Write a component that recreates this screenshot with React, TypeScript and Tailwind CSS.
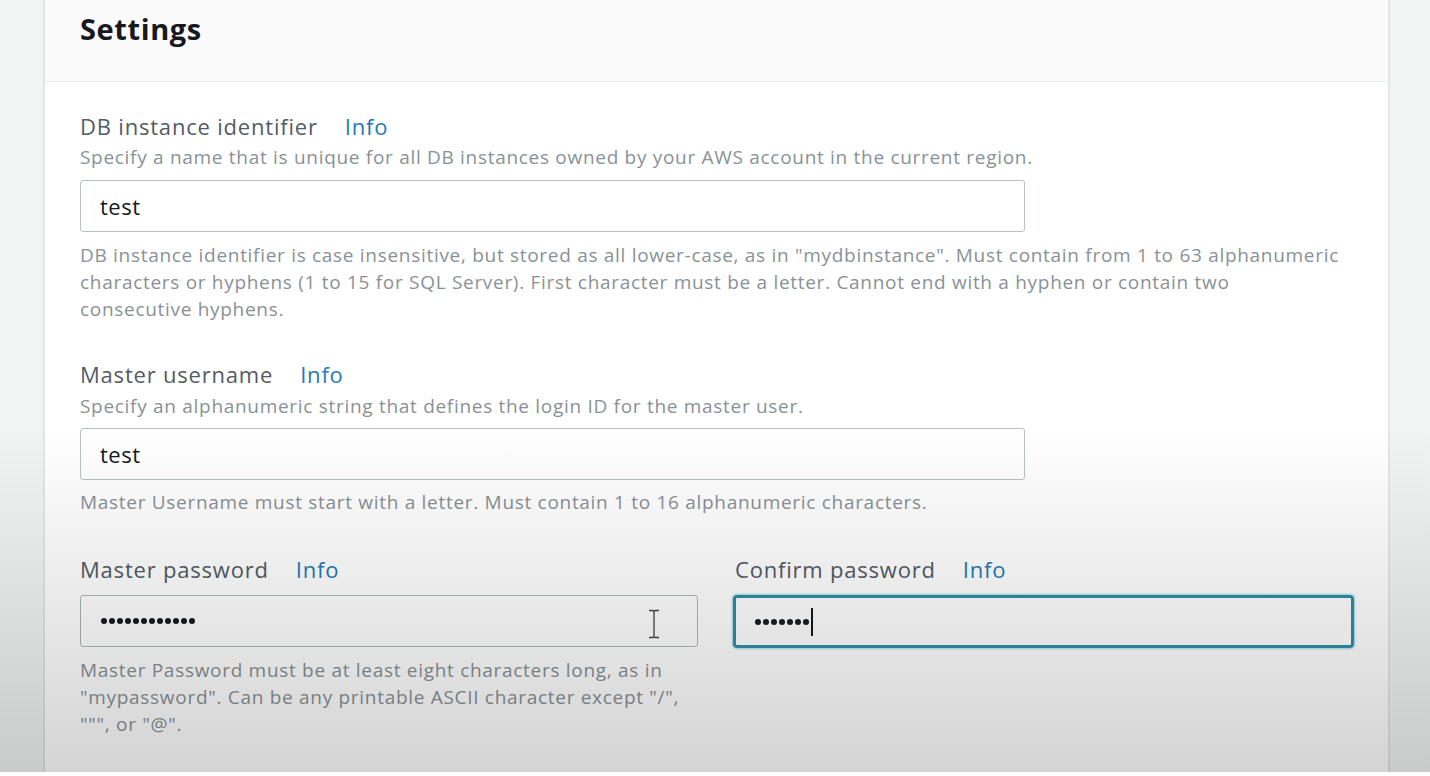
import React from 'react'

const font = { fontFamily: '"Open Sans", "Liberation Sans", sans-serif' }

function Label({ text }: { text: string }) {
  return (
    <div className="flex items-center h-[30px] gap-[27px] text-[22px] leading-[30px] tracking-[0.8px]">
      <span className="text-[#545b64]">{text}</span>
      <span className="text-[#1f7bb4]">Info</span>
    </div>
  )
}

function Dots({ n }: { n: number }) {
  return (
    <div className="flex items-center gap-[2px]">
      {Array.from({ length: n }).map((_, i) => (
        <span key={i} className="w-[6px] h-[6px] rounded-full bg-[#16191f]" />
      ))}
    </div>
  )
}

const help = 'text-[19px] tracking-[0.7px] text-[#8a9196]'

export default function App() {
  return (
    <div style={font} className="relative w-full h-[776px] overflow-hidden bg-white">
      <div className="flex h-[772px] bg-[#f2f3f3]">
        <div className="w-[43px] shrink-0" />
        <div className="w-[1347px] shrink-0 bg-white border-l-[2px] border-r-[2px] border-[#e3e6e6] flex flex-col">
          <div className="h-[82px] bg-[#fafafa] border-b border-[#eaeded] flex items-start pl-[35px] pt-[9px]">
            <h2 className="text-[29px] leading-[40px] tracking-[0.6px] font-bold text-[#16191f]">Settings</h2>
          </div>

          <div className="pl-[35px] pt-[29px]">
            <Label text="DB instance identifier" />
            <p className={`mt-[3px] leading-[26px] ${help}`}>
              Specify a name that is unique for all DB instances owned by your AWS account in the current region.
            </p>
            <div className="mt-[10px] w-[945px] h-[52px] border border-[#b9c1c2] rounded-[3px] flex items-center pl-[19px] text-[22px] tracking-[0.5px] text-[#16191f]">
              test
            </div>
            <p className={`mt-[10px] w-[1262px] leading-[27px] ${help}`}>
              DB instance identifier is case insensitive, but stored as all lower-case, as in "mydbinstance". Must contain from 1 to 63 alphanumeric characters or hyphens (1 to 15 for SQL Server). First character must be a letter. Cannot end with a hyphen or contain two consecutive hyphens.
            </p>

            <div className="mt-[36px]">
              <Label text="Master username" />
            </div>
            <p className={`mt-[4px] leading-[26px] ${help}`}>
              Specify an alphanumeric string that defines the login ID for the master user.
            </p>
            <div className="mt-[9px] w-[945px] h-[52px] border border-[#b9c1c2] rounded-[3px] flex items-center pl-[19px] text-[22px] tracking-[0.5px] text-[#16191f]">
              test
            </div>
            <p className={`mt-[9px] leading-[27px] ${help}`}>
              Master Username must start with a letter. Must contain 1 to 16 alphanumeric characters.
            </p>

            <div className="mt-[38px] flex gap-[35px]">
              <div className="w-[618px]">
                <Label text="Master password" />
                <div className="relative mt-[11px] h-[52px] border border-[#aab7b8] rounded-[3px] flex items-center pl-[20px]">
                  <Dots n={12} />
                  <svg className="absolute left-[566px] top-[13px]" width="14" height="30" viewBox="0 0 14 30">
                    <path d="M2 1.5h3.5M8.5 1.5H12M7 2v26M2 28.5h3.5M8.5 28.5H12M5.5 1.5C6.5 1.5 7 2 7 3M8.5 1.5C7.5 1.5 7 2 7 3M5.5 28.5C6.5 28.5 7 28 7 27M8.5 28.5C7.5 28.5 7 28 7 27" stroke="#444" strokeWidth="1.3" fill="none" />
                  </svg>
                </div>
                <p className={`mt-[10px] w-[615px] leading-[27px] ${help}`}>
                  Master Password must be at least eight characters long, as in "mypassword". Can be any printable ASCII character except "/", """, or "@".
                </p>
              </div>
              <div className="w-[621px]">
                <div className="pl-[2px]">
                  <Label text="Confirm password" />
                </div>
                <div className="mt-[11px] h-[53px] border-[3px] border-[#2f8fa6] rounded-[4px] shadow-[0_0_2px_1px_rgba(68,185,214,0.5)] flex items-center pl-[19px]">
                  <Dots n={7} />
                  <span className="ml-[2px] w-[2px] h-[28px] bg-[#16191f]" />
                </div>
              </div>
            </div>
          </div>
        </div>
        <div className="flex-1 bg-[#f2f3f3]" />
      </div>
      <div className="pointer-events-none absolute left-0 right-0 top-[430px] h-[342px] bg-gradient-to-b from-transparent to-black/[0.17]" />
    </div>
  )
}
